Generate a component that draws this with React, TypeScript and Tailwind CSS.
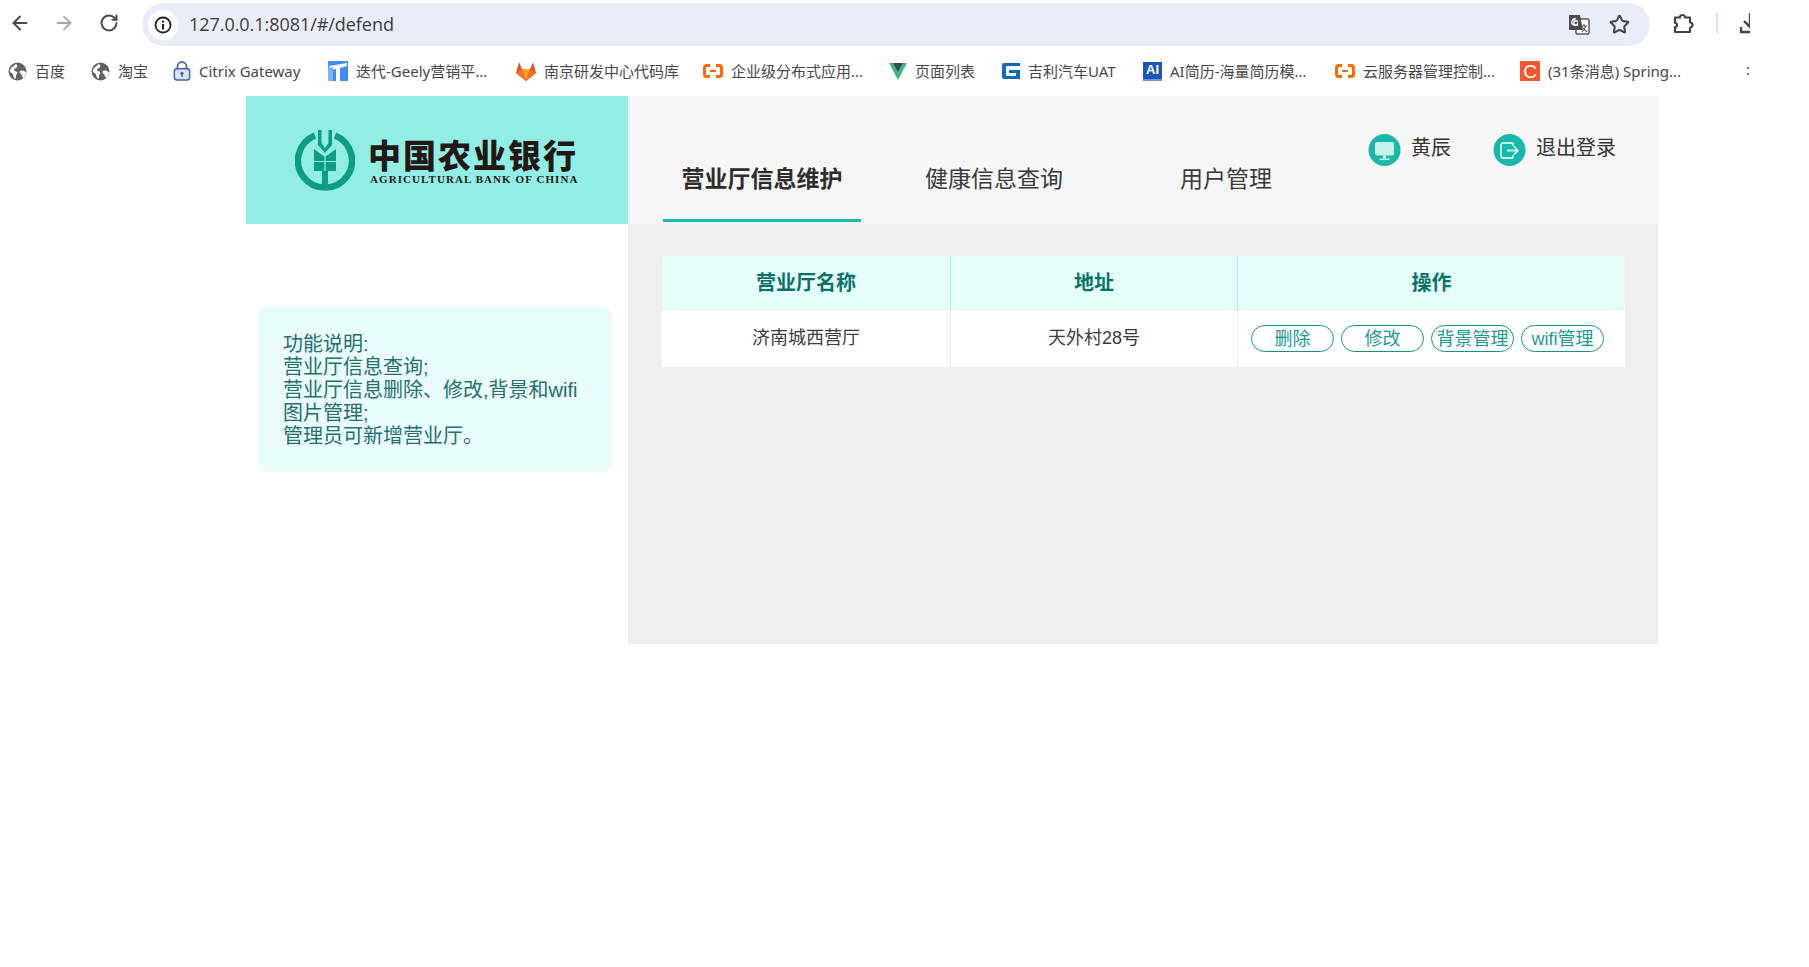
import React from "react";
import { ArrowLeft, ArrowRight, RotateCw, Star } from "lucide-react";

const Globe = () => (
  <svg width="19" height="19" viewBox="0 0 19 19" className="flex-none">
    <circle cx="9.5" cy="9.5" r="9" fill="#5f6368" />
    <path d="M3 6c2-1 3-3 5-4 1 1 2 2 1 3-1 2-3 1-3 3 0 1 2 1 3 2 1 2-1 2-1 4 0 1 0 2-1 3-1-1-2-3-2-5-1-1-2-1-3-2 0-1 0-3 1-4zM12 9c2-1 4 0 6 1 0 2-1 5-3 6-1-1-1-3-2-4-1 0-2-2-1-3z" fill="#fff" />
  </svg>
);
const Lock = () => (
  <svg width="18" height="22" viewBox="0 0 20 22" className="flex-none">
    <path d="M5 9V6a5 5 0 0 1 10 0v3" fill="none" stroke="#4a6cb8" strokeWidth="2" />
    <rect x="1.5" y="8.5" width="17" height="12.5" rx="3" fill="#d9e3f6" stroke="#3f5fb0" strokeWidth="1.6" />
    <circle cx="10" cy="13.5" r="1.8" fill="#3f5fb0" />
    <rect x="9.2" y="14" width="1.6" height="3.6" fill="#3f5fb0" />
  </svg>
);
const Tapd = () => (
  <svg width="20" height="20" viewBox="0 0 20 20" className="flex-none">
    <rect width="20" height="20" fill="#3f8cf4" />
    <path d="M1 5l18-3v3L12 7v13H8V8L2 9z" fill="#fff" />
    <path d="M0 7l5-1v14H0z" fill="#7fb2f8" />
  </svg>
);
const GitLab = () => (
  <svg width="20" height="20" viewBox="0 0 20 20" className="flex-none">
    <path d="M10 20L0 12l3-11 3 7h8l3-7 3 11z" fill="#e8532b" />
    <path d="M10 20L6 8h8z" fill="#fca326" />
    <path d="M10 20L0 12l6-4zM10 20l10-8-6-4z" fill="#f0702d" />
  </svg>
);
const Aliyun = () => (
  <svg width="20" height="14" viewBox="0 0 20 14" className="flex-none">
    <path d="M7 1.5H3.5A2 2 0 0 0 1.500 3.500v7a2 2 0 0 0 2 2H7M13 1.500h3.500a2 2 0 0 1 2 2v7a2 2 0 0 1-2 2H13" fill="none" stroke="#ff6a00" strokeWidth="3" />
    <rect x="7" y="6" width="6" height="2" fill="#ff6a00" />
  </svg>
);
const Vue = () => (
  <svg width="18" height="18" viewBox="0 0 18 18" className="flex-none">
    <path d="M0 1h18L9 18z" fill="#41b883" />
    <path d="M4 1h10L9 10z" fill="#35495e" />
  </svg>
);
const GLogo = () => (
  <svg width="18" height="16" viewBox="0 0 18 16" className="flex-none">
    <path d="M2 0h16v3H5a1 1 0 0 0-1 1v8a1 1 0 0 0 1 1h9v-3H7V7h11v9H2a2 2 0 0 1-2-2V2a2 2 0 0 1 2-2z" fill="#0b6bbd" />
  </svg>
);
const AiLogo = () => (
  <div className="w-[19px] h-[19px] flex-none bg-[#1f55b8] flex items-start justify-center border-b-2 border-[#6d95dc] text-white text-[13px] leading-[15px] font-bold font-['Liberation_Sans',sans-serif]">
    AI
  </div>
);
const CLogo = () => (
  <div className="w-[20px] h-[20px] flex-none bg-[#f1582f] flex items-center justify-center text-white text-[19px] leading-none font-['Liberation_Sans',sans-serif]">
    C
  </div>
);

const bookmarks = [
  { w: "w-[83px]", icon: <Globe />, text: "百度" },
  { w: "w-[82px]", icon: <Globe />, text: "淘宝" },
  { w: "w-[155px]", icon: <Lock />, text: "Citrix Gateway" },
  { w: "w-[188px]", icon: <Tapd />, text: "迭代-Geely营销平..." },
  { w: "w-[187px]", icon: <GitLab />, text: "南京研发中心代码库" },
  { w: "w-[186px]", icon: <Aliyun />, text: "企业级分布式应用..." },
  { w: "w-[113px]", icon: <Vue />, text: "页面列表" },
  { w: "w-[141px]", icon: <GLogo />, text: "吉利汽车UAT" },
  { w: "w-[192px]", icon: <AiLogo />, text: "AI简历-海量简历模..." },
  { w: "w-[185px]", icon: <Aliyun />, text: "云服务器管理控制..." },
  { w: "w-[215px]", icon: <CLogo />, text: "(31条消息) Spring..." },
];

const Emblem = () => (
  <svg width="60" height="63" viewBox="0 0 60 63" className="flex-none">
    <path d="M20 5.500A27 27 0 1 0 40 5.500" fill="none" stroke="#0f9d80" strokeWidth="6.500" />
    <path d="M23 0h3.500v13l3.500 5 3.500-5V0H37v15l-7 8-7-8z" fill="#0f9d80" />
    <path d="M19 19l11 8 11-8v22h-8v15h-6V41h-8z" fill="#0f9d80" />
    <path d="M19 31.500h22M30 27v14" stroke="#92ede4" strokeWidth="1.200" fill="none" />
  </svg>
);

const HeadCell = ({ children, last }: { children: React.ReactNode; last?: boolean }) => (
  <div className={`flex items-center justify-center text-[20px] font-bold text-[#0b7268] border-b border-[#dcf3f1] ${last ? "" : "border-r border-r-[#a5e8df]"}`}>
    {children}
  </div>
);

const Btn = ({ children }: { children: React.ReactNode }) => (
  <button className="w-[83px] h-[27px] flex-none flex items-center justify-center rounded-full border border-[#16918a] text-[18px] leading-none text-[#1b9a92] bg-white whitespace-nowrap">
    {children}
  </button>
);

export default function App() {
  return (
    <div className="min-h-[967px] bg-white font-['Noto_Sans','Noto_Sans_CJK_SC',sans-serif] overflow-hidden">
      <div className="w-[1750px] overflow-hidden">
        {/* toolbar */}
        <div className="h-[46px] flex items-start text-[#474747]">
          <div className="w-[142px] h-[46px] flex-none flex items-center pl-[9px] gap-[22px]">
            <ArrowLeft size={22} strokeWidth={2.2} color="#4a4a4a" />
            <ArrowRight size={22} strokeWidth={2} color="#a8a8a8" />
            <RotateCw size={20} strokeWidth={2.4} color="#4a4a4a" className="ml-[2px]" />
          </div>
          <div className="mt-[3px] w-[1508px] h-[43px] flex-none rounded-full bg-[#e9edf7] flex items-center pl-[6px] pr-[20px]">
            <div className="w-[30px] h-[30px] rounded-full bg-white flex items-center justify-center flex-none">
              <svg width="18" height="18" viewBox="0 0 18 18">
                <circle cx="9" cy="9" r="7.500" fill="none" stroke="#1f1f1f" strokeWidth="1.800" />
                <rect x="8" y="8" width="2" height="5.500" fill="#1f1f1f" />
                <rect x="8" y="4.500" width="2" height="2" fill="#1f1f1f" />
              </svg>
            </div>
            <span className="ml-[11px] text-[18px] text-[#3c3c3c] font-['Open_Sans',sans-serif] tracking-[-0.05px]">127.0.0.1:8081/#/defend</span>
            <div className="ml-auto flex items-center gap-[19px]">
              <svg width="22" height="22" viewBox="0 0 22 22">
                <rect x="8" y="5" width="13" height="15" rx="1.500" fill="#fff" stroke="#555" strokeWidth="1.500" />
                <path d="M1 1h11l3 15H2a1 1 0 0 1-1-1z" fill="#4d4d4d" />
                <path d="M10 7H6v4h3.500v-1A3.200 3.200 0 1 1 8 5" fill="none" stroke="#fff" strokeWidth="1.300" />
                <path d="M13 12h6M16 10v2M14 18l4-6M15 14l4 4" stroke="#555" strokeWidth="1.100" fill="none" />
              </svg>
              <Star size={21} strokeWidth={2.4} color="#474747" />
            </div>
          </div>
          <div className="flex-none h-[46px] flex items-center pl-[23px]">
            <svg width="22" height="22" viewBox="0 0 22 22">
              <path d="M2 5.500h5a2.500 2.500 0 0 1 5 0h5v5a2.500 2.500 0 0 1 0 5v4.500H2v-5a2 2 0 0 0 0-4z" fill="none" stroke="#444" strokeWidth="2.200" strokeLinejoin="round" />
            </svg>
            <div className="ml-[21px] w-[2px] h-[20px] bg-[#d3e3fd]" />
            <svg width="18" height="22" viewBox="0 0 18 22" className="ml-[22px] flex-none">
              <path d="M10 1v13M4 9l6 6 6-6M1 15v5h16" fill="none" stroke="#444" strokeWidth="2.400" />
            </svg>
          </div>
        </div>

        {/* bookmarks */}
        <div className="h-[50px] flex items-center pl-[8px] text-[15px] text-[#474747] relative">
          {bookmarks.map((b) => (
            <div key={b.text} className={`${b.w} flex-none flex items-center gap-[8px] whitespace-nowrap`}>
              {b.icon}
              <span>{b.text}</span>
            </div>
          ))}
          <span className="absolute right-0 top-[12px] text-[15px] text-[#474747]">:</span>
        </div>
      </div>

      {/* page */}
      <div className="ml-[246px] w-[1412px]">
        <div className="flex h-[128px]">
          <div className="w-[382px] flex-none bg-[#92ede4] flex items-start pl-[49px] pt-[34px] gap-[13px]">
            <Emblem />
            <div className="flex flex-col text-[#231815] mt-[5px]">
              <span className="text-[33px] leading-[38px] font-black tracking-[2px] whitespace-nowrap font-['Noto_Sans_CJK_SC',sans-serif]">中国农业银行</span>
              <span className="ml-[2px] text-[11px] leading-[13px] font-bold tracking-[1.08px] whitespace-nowrap font-['Liberation_Serif',serif]">AGRICULTURAL BANK OF CHINA</span>
            </div>
          </div>
          <div className="flex-1 bg-[#f6f6f6] flex pl-[18px]">
            <div className="w-[232px] flex justify-center pt-[40px]">
              <div className="w-[198px] h-[86px] border-b-[3px] border-[#17bcb0] text-center text-[23px] leading-[36px] font-bold text-[#2d2d2d] pt-[24px]">营业厅信息维护</div>
            </div>
            <div className="w-[232px] flex justify-center pt-[64px] text-[23px] leading-[36px] text-[#3a3a3a]">健康信息查询</div>
            <div className="w-[232px] flex justify-center pt-[64px] text-[23px] leading-[36px] text-[#3a3a3a]">用户管理</div>
            <div className="flex-1 flex items-start pt-[38px] pl-[26px] text-[20px] leading-[28px] text-[#333]">
              <svg width="33" height="32" viewBox="0 0 33 32" className="flex-none">
                <circle cx="16.500" cy="16" r="16" fill="#19b8aa" />
                <rect x="7" y="8" width="19" height="13.500" rx="2" fill="#c8f1ec" />
                <rect x="15" y="21.500" width="3" height="3" fill="#c8f1ec" />
                <rect x="11.500" y="24.500" width="10" height="1.600" fill="#c8f1ec" />
              </svg>
              <span className="ml-[10px]">黄辰</span>
              <svg width="33" height="32" viewBox="0 0 33 32" className="flex-none ml-[42px]">
                <circle cx="16.500" cy="16" r="16" fill="#19b8aa" />
                <path d="M20 9H10a2 2 0 0 0-2 2v11a2 2 0 0 0 2 2h10" fill="none" stroke="#c8f1ec" strokeWidth="1.800" />
                <path d="M20 24v-3M20 9v3M14 16.500h11M21 12.500l4 4-4 4" fill="none" stroke="#c8f1ec" strokeWidth="1.800" />
              </svg>
              <span className="ml-[10px]">退出登录</span>
            </div>
          </div>
        </div>
        <div className="flex font-['Liberation_Sans','Noto_Sans_CJK_SC',sans-serif]">
          <div className="w-[382px] flex-none pl-[12px] pr-[16px] pt-[83px]">
            <div className="h-[165px] rounded-[10px] bg-[#e9fbfa] pl-[25px] pr-[26px] pt-[26px] text-[20px] leading-[23px] text-[#24706e]">
              功能说明:<br />
              营业厅信息查询;<br />
              营业厅信息删除、修改,背景和wifi图片管理;<br />
              管理员可新增营业厅。
            </div>
          </div>
          <div className="flex-1 h-[420px] bg-[#efefef] pl-[34px] pr-[33px] pt-[32px]">
            <div className="grid grid-cols-[289px_287px_1fr] grid-rows-[54px_57px] rounded-t-[2px] overflow-hidden">
              <div className="contents [&>*]:bg-[#e5fdfb]">
                <HeadCell>营业厅名称</HeadCell>
                <HeadCell>地址</HeadCell>
                <HeadCell last>操作</HeadCell>
              </div>
              <div className="bg-white border-r border-[#e5f1f3] flex items-center justify-center text-[18px] text-[#3c3c3c]">济南城西营厅</div>
              <div className="bg-white border-r border-[#e5f1f3] flex items-center justify-center text-[18px] text-[#3c3c3c]">天外村28号</div>
              <div className="bg-white flex items-start pt-[15px] pl-[13px] gap-[7px]">
                <Btn>删除</Btn>
                <Btn>修改</Btn>
                <Btn>背景管理</Btn>
                <Btn>wifi管理</Btn>
              </div>
            </div>
          </div>
        </div>
      </div>
    </div>
  );
}
